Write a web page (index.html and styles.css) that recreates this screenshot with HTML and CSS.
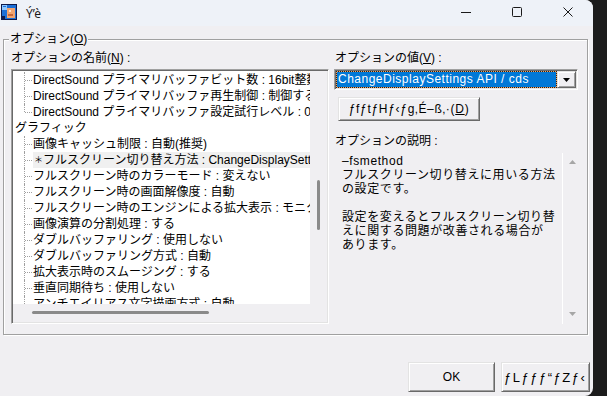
FILE: index.html
```html
<!DOCTYPE html>
<html lang="ja">
<head>
    <meta charset="UTF-8">
    <title>Ý’è</title>
    <link rel="stylesheet" href="styles.css">
</head>
<body>
    <div class="window">
        <div class="titlebar">
            <svg class="app-icon" width="16" height="16" viewBox="0 0 16 16">
                <rect x="0" y="0" width="16" height="16" fill="#0d1a4a"/>
                <rect x="1" y="1" width="14" height="14" fill="#1b6fd6"/>
                <rect x="1" y="1" width="5" height="5" fill="#8ec8ff"/>
                <rect x="2" y="2" width="3" height="1" fill="#1b6fd6"/>
                <rect x="6" y="4" width="8" height="10" fill="#f2a46e"/>
                <rect x="8" y="6" width="2" height="2" fill="#ffe0c8"/>
                <rect x="7" y="10" width="5" height="2" fill="#c8683a"/>
                <rect x="1" y="12" width="3" height="3" fill="#0d1a4a"/>
            </svg>
            <span class="title">Ý’è</span>
            <div class="caption-buttons">
                <span class="cap-btn">
                    <svg width="10" height="10" viewBox="0 0 10 10"><path d="M0 5.5h10" stroke="#1a1a1a" stroke-width="1"/></svg>
                </span>
                <span class="cap-btn">
                    <svg width="10" height="10" viewBox="0 0 10 10"><rect x="0.5" y="0.5" width="9" height="9" rx="1" fill="none" stroke="#1a1a1a" stroke-width="1"/></svg>
                </span>
                <span class="cap-btn">
                    <svg width="10" height="10" viewBox="0 0 10 10"><path d="M0.5 0.5l9 9M9.5 0.5l-9 9" stroke="#1a1a1a" stroke-width="1"/></svg>
                </span>
            </div>
        </div>

        <div class="client">
            <div class="group">
                <span class="group-label">オプション(<u>O</u>)</span>
                <div class="group-body">
                    <div class="col-names">
                        <div class="field-label">オプションの名前(<u>N</u>) :</div>
                        <div class="listbox">
                            <div class="tree">
                                <div class="node child">DirectSound プライマリバッファビット数 : 16bit整数</div>
                                <div class="node child">DirectSound プライマリバッファ再生制御 : 制御する</div>
                                <div class="node child last">DirectSound プライマリバッファ設定試行レベル : 0</div>
                                <div class="node">グラフィック</div>
                                <div class="node child">画像キャッシュ制限 : 自動(推奨)</div>
                                <div class="node child"><span class="selected"><span class="ast">＊</span>フルスクリーン切り替え方法 : ChangeDisplaySettings</span></div>
                                <div class="node child">フルスクリーン時のカラーモード : 変えない</div>
                                <div class="node child">フルスクリーン時の画面解像度 : 自動</div>
                                <div class="node child">フルスクリーン時のエンジンによる拡大表示 : モニタ</div>
                                <div class="node child">画像演算の分割処理 : する</div>
                                <div class="node child">ダブルバッファリング : 使用しない</div>
                                <div class="node child">ダブルバッファリング方式 : 自動</div>
                                <div class="node child">拡大表示時のスムージング : する</div>
                                <div class="node child">垂直同期待ち : 使用しない</div>
                                <div class="node child">アンチエイリアス文字描画方式 : 自動</div>
                            </div>
                            <div class="vscroll"><div class="vthumb"></div></div>
                            <div class="hscroll"><div class="hthumb"></div></div>
                            <div class="corner"></div>
                        </div>
                    </div>

                    <div class="col-value">
                        <div class="field-label">オプションの値(<u>V</u>) :</div>
                        <div class="combo">
                            <div class="combo-value">ChangeDisplaySettings API / cds</div>
                            <div class="combo-drop">
                                <svg width="7" height="4" viewBox="0 0 7 4"><path d="M0 0h7L3.5 4z" fill="#000"/></svg>
                            </div>
                        </div>
                        <button type="button" class="btn3d btn-reset">ƒfƒtƒHƒ‹ƒg‚É–ß‚·(<u>D</u>)</button>
                        <div class="field-label desc-label">オプションの説明 :</div>
                        <div class="desc">
                            <div class="desc-text">
                                <p>–fsmethod</p>
                                <p>フルスクリーン切り替えに用いる方法</p>
                                <p>の設定です。</p>
                                <p class="blank"></p>
                                <p>設定を変えるとフルスクリーン切り替</p>
                                <p>えに関する問題が改善される場合が</p>
                                <p>あります。</p>
                            </div>
                            <div class="desc-scroll">
                                <svg width="7" height="4" viewBox="0 0 7 4"><path d="M0 4h7L3.5 0z" fill="#a6a6a6"/></svg>
                                <svg width="7" height="4" viewBox="0 0 7 4"><path d="M0 0h7L3.5 4z" fill="#a6a6a6"/></svg>
                            </div>
                        </div>
                    </div>
                </div>
            </div>

            <div class="dialog-buttons">
                <button type="button" class="btn3d btn-ok">OK</button>
                <button type="button" class="btn3d btn-cancel">ƒLƒƒƒ“ƒZƒ‹</button>
            </div>
        </div>
    </div>
</body>
</html>
```

FILE: styles.css
```css
:root {
    --face: #f0eff2;
    --shadow: #a0a0a0;
    --dark-shadow: #696969;
    --light: #e3e3e3;
}

* {
    box-sizing: border-box;
    margin: 0;
    padding: 0;
}

body {
    background-color: #1c1c1c;
    font-family: "Liberation Sans", "Noto Sans CJK JP", sans-serif;
    font-size: 12px;
    color: #000;
}

u {
    text-underline-offset: 1px;
}

.window {
    width: 593px;
    height: 396px;
    background-color: var(--face);
    border-radius: 0 8px 8px 0;
    overflow: hidden;
    display: flex;
    flex-direction: column;
}

/* title bar */
.titlebar {
    height: 26px;
    flex-shrink: 0;
    background-color: #eef2f8;
    display: flex;
    align-items: center;
}

.app-icon {
    margin: 0 9px 2px 1px;
}

.title {
    font-family: "Noto Sans", sans-serif;
    font-size: 12px;
    color: #1a1a1a;
}

.caption-buttons {
    margin-left: auto;
    display: flex;
    height: 100%;
}

.cap-btn {
    width: 51px;
    height: 100%;
    display: flex;
    align-items: center;
    justify-content: center;
    padding-bottom: 2px;
}

/* dialog body */
.client {
    flex: 1;
    padding: 13px 3px 0 3px;
    display: flex;
    flex-direction: column;
}

.group {
    position: relative;
    width: 585px;
    height: 296px;
    border: 1px solid var(--shadow);
    box-shadow: inset 1px 1px 0 #fff, 1px 1px 0 #fff;
    padding: 11px 0 0 7px;
}

.group-label {
    position: absolute;
    top: -8px;
    left: 5px;
    padding: 0 1px;
    line-height: 14px;
    background-color: var(--face);
}

.group-body {
    display: flex;
    gap: 5px;
}

.field-label {
    height: 14px;
    line-height: 14px;
    margin-bottom: 4px;
    white-space: nowrap;
}

.col-names {
    width: 318px;
}

.col-value {
    width: 253px;
}

.col-value .field-label {
    padding-left: 1px;
}

/* sunken list with tree */
.listbox {
    height: 255px;
    border: 1px solid;
    border-color: var(--shadow) #fff #fff var(--shadow);
    box-shadow: inset 1px 1px 0 var(--dark-shadow), inset -1px -1px 0 var(--light);
    padding: 1px;
    display: grid;
    grid-template-columns: 1fr 17px;
    grid-template-rows: 233px 18px;
}

.tree {
    background-color: #fff;
    overflow: hidden;
    padding-top: 1px;
}

.node {
    height: 16px;
    line-height: 16px;
    white-space: nowrap;
    padding-left: 2px;
}

.node.child {
    position: relative;
    padding-left: 20px;
}

.node.child::before {
    content: "";
    position: absolute;
    left: 11px;
    top: 0;
    bottom: 0;
    border-left: 1px dotted var(--shadow);
}

.node.child.last::before {
    bottom: 8px;
}

.node.child::after {
    content: "";
    position: absolute;
    left: 12px;
    top: 8px;
    width: 7px;
    border-top: 1px dotted var(--shadow);
}

.selected {
    display: inline-block;
    padding: 0 1px;
    background-color: #f0f0f0;
}

.ast {
    font-size: 9px;
    vertical-align: top;
}

.vscroll,
.hscroll,
.corner {
    background-color: var(--face);
}

.vthumb {
    width: 3px;
    height: 50px;
    margin: 109px 0 0 7px;
    border-radius: 2px;
    background-color: #8a8a8a;
}

.hthumb {
    width: 177px;
    height: 3px;
    margin: 7px 0 0 19px;
    border-radius: 2px;
    background-color: #8a8a8a;
}

/* combo box */
.combo {
    width: 244px;
    height: 21px;
    border: 1px solid;
    border-color: var(--shadow) #fff #fff var(--shadow);
    box-shadow: inset 1px 1px 0 var(--dark-shadow), inset -1px -1px 0 var(--light);
    padding: 1px;
    display: flex;
}

.combo-value {
    flex: 1;
    border: 1px dotted #222;
    background: linear-gradient(#0078d7, #0078d7) padding-box, #f5a35c;
    color: #fff;
    line-height: 15px;
    padding-left: 1px;
    letter-spacing: 0.5px;
    white-space: nowrap;
    overflow: hidden;
}

.combo-drop {
    width: 19px;
    background-color: var(--face);
    border: 1px solid;
    border-color: var(--light) var(--dark-shadow) var(--dark-shadow) var(--light);
    box-shadow: inset 1px 1px 0 #fff, inset -1px -1px 0 var(--shadow);
    display: flex;
    align-items: center;
    justify-content: center;
}

/* buttons */
.btn3d {
    font-family: inherit;
    font-size: 12px;
    color: #000;
    background-color: var(--face);
    border: 1px solid;
    border-color: var(--light) var(--dark-shadow) var(--dark-shadow) var(--light);
    box-shadow: inset 1px 1px 0 #fff, inset -1px -1px 0 var(--shadow);
    display: flex;
    align-items: center;
    justify-content: center;
    white-space: nowrap;
    overflow: hidden;
}

.btn-reset {
    width: 142px;
    height: 24px;
    margin: 7px 0 0 4px;
    letter-spacing: 0.7px;
}

.desc-label {
    margin-top: 13px;
    margin-bottom: 5px;
}

.desc {
    width: 248px;
    height: 171px;
    display: flex;
}

.desc-text {
    flex: 1;
    padding: 1px 0 0 8px;
    letter-spacing: 0.6px;
    white-space: nowrap;
    overflow: hidden;
}

.desc-text p {
    height: 14px;
    line-height: 14px;
}

.desc-scroll {
    width: 20px;
    border-left: 1px solid #fff;
    display: flex;
    flex-direction: column;
    align-items: center;
    justify-content: space-between;
    padding: 7px 0 8px;
}

.dialog-buttons {
    display: flex;
    justify-content: flex-end;
    gap: 6px;
    margin-top: 27px;
}

.btn-ok {
    width: 87px;
    height: 30px;
}

.btn-cancel {
    width: 89px;
    height: 30px;
    justify-content: flex-start;
    padding-left: 2px;
    font-size: 13px;
    letter-spacing: 1.5px;
}
```
